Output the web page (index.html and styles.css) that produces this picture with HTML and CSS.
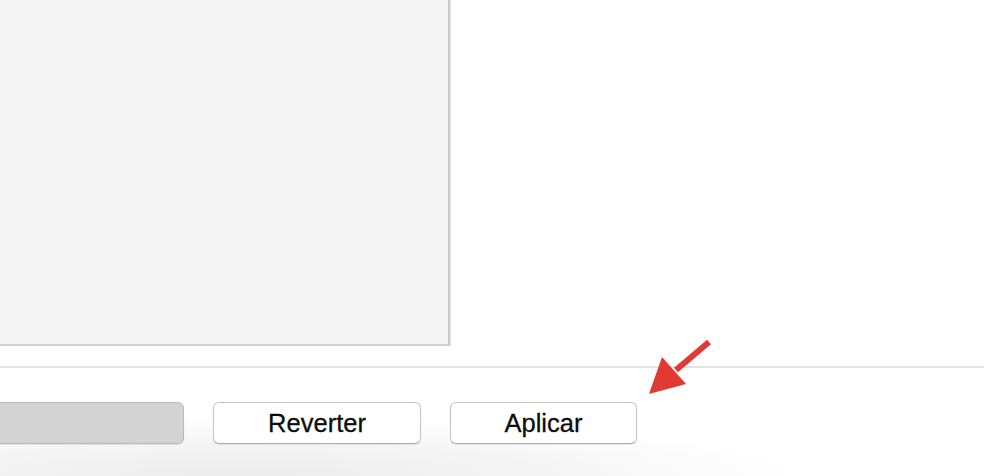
FILE: index.html
```html
<!DOCTYPE html>
<html lang="pt">
<head>
  <meta charset="UTF-8" />
  <title>Preferências</title>
  <link rel="stylesheet" href="styles.css">
</head>
<body>
  <div class="window">
    <div class="top">
      <div class="list-panel"></div>
    </div>

    <div class="separator"></div>

    <div class="actions">
      <button class="btn disabled" disabled></button>
      <button class="btn">Reverter</button>
      <button class="btn">Aplicar</button>
    </div>

    <!-- seta de anotação -->
    <svg class="arrow" width="80" height="70" viewBox="0 0 80 70">
      <line x1="69" y1="2" x2="36" y2="30" stroke="#e03a33" stroke-width="6" stroke-linecap="butt" />
      <polygon points="9,54 22,17 46,44" fill="#e03a33" />
    </svg>
  </div>
</body>
</html>
```

FILE: styles.css
```css
:root {
  --panel: #f4f4f4;
  --panel-border: #c9c9c9;
  --line: #e2e2e2;
  --btn-border: #c4c4c4;
  --text: #0c0c0c;
}

html, body {
  margin: 0;
  padding: 0;
}

body {
  width: 984px;
  height: 476px;
  overflow: hidden;
  font-family: 'Helvetica Neue', 'Liberation Sans', Arial, sans-serif;
  color: var(--text);
}

.window {
  position: relative;
  height: 476px;
  background: radial-gradient(ellipse 560px 60px at 240px 476px, #ececec 0%, #f5f5f5 55%, #ffffff 100%);
}

.top {
  height: 346px;
  background: #fff;
}

.list-panel {
  width: 448px;
  height: 344px;
  background: var(--panel);
  border-right: 2px solid var(--panel-border);
  border-bottom: 2px solid #d2d2d2;
  box-shadow: 1px 0 0 #e6e6e6;
}

.separator {
  height: 20px;
  border-bottom: 2px solid var(--line);
  background: #fff;
}

.actions {
  display: flex;
  gap: 29px;
  padding-top: 34px;
}

.btn {
  height: 42px;
  padding: 0;
  border: 1px solid var(--btn-border);
  border-bottom-color: #aeaeae;
  border-radius: 6px;
  background: #fff;
  font-family: inherit;
  font-size: 25.5px;
  color: var(--text);
  -webkit-text-stroke: 0.3px #0c0c0c;
  box-shadow: 0 1px 1px rgba(0, 0, 0, 0.08);
}

.btn:nth-child(2) {
  width: 208px;
}

.btn:nth-child(3) {
  width: 187px;
}

.btn.disabled {
  width: 204px;
  margin-left: -20px;
  background: #d3d3d3;
  border-color: #b9b9b9;
}

.arrow {
  position: absolute;
  left: 640px;
  top: 340px;
}
```
